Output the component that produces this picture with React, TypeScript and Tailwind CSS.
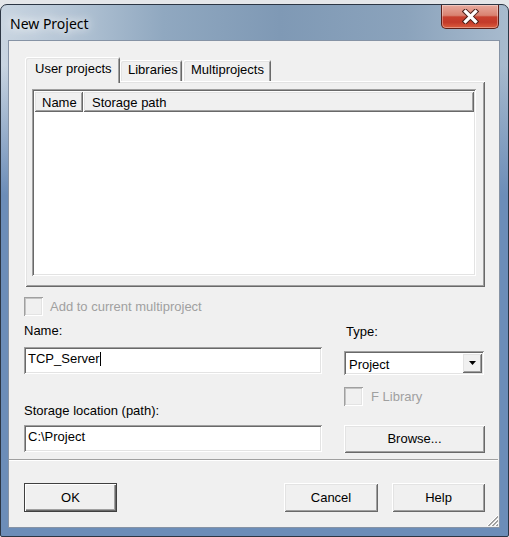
import React from "react";

const raised =
  "shadow-[inset_1px_1px_0_#ffffff,inset_-1px_-1px_0_#696969,inset_2px_2px_0_#e3e3e3,inset_-2px_-2px_0_#a0a0a0]";
const sunken =
  "shadow-[inset_1px_1px_0_#a0a0a0,inset_-1px_-1px_0_#ffffff,inset_2px_2px_0_#696969,inset_-2px_-2px_0_#e3e3e3]";
const sunkenDisabled =
  "shadow-[inset_1px_1px_0_#a0a0a0,inset_-1px_-1px_0_#ffffff,inset_2px_2px_0_#c4c4c4,inset_-2px_-2px_0_#e3e3e3]";
const tabShadow =
  "shadow-[inset_1px_1px_0_#ffffff,inset_-1px_0_0_#696969,inset_2px_2px_0_#e3e3e3,inset_-2px_0_0_#a0a0a0]";

function Grip() {
  const ks = [1, 5, 9];
  return (
    <svg width="12" height="12" viewBox="0 0 12 12">
      {ks.map((k) => (
        <g key={k}>
          <line x1={k} y1={12} x2={12} y2={k} stroke="#ffffff" strokeWidth="1" />
          <line x1={k + 1} y1={12} x2={12} y2={k + 1} stroke="#a0a0a0" strokeWidth="1" />
          <line x1={k + 2} y1={12} x2={12} y2={k + 2} stroke="#a0a0a0" strokeWidth="1" />
        </g>
      ))}
    </svg>
  );
}

function CloseX() {
  const d = "M3.5 2.5 L13.5 12.5 M13.5 2.5 L3.5 12.5";
  return (
    <svg width="17" height="15" viewBox="0 0 17 15">
      <path d={d} stroke="#4b1f19" strokeWidth="5.2" strokeLinecap="square" fill="none" />
      <path d={d} stroke="#ffffff" strokeWidth="3.2" strokeLinecap="square" fill="none" />
    </svg>
  );
}

export default function App() {
  return (
    <div className="w-[509px] h-[537px] bg-[#e4e6e9] pt-[4px] overflow-hidden font-['Liberation_Sans',Arial,sans-serif] text-[13px] leading-[16px] text-black">
      <div className="w-[509px] h-[533px] rounded-t-[7px] rounded-b-[2px] border border-[#2c3644] flex flex-col [background-image:linear-gradient(180deg,rgba(108,141,184,0)_0px,rgba(108,141,184,0)_60px,rgba(108,141,184,1)_190px),linear-gradient(90deg,#c9d5e1_0%,#b7c7d7_12%,#90a8c0_32%,#7f99b5_55%,#8ba3bc_80%,#a8bbce_100%)]">
        {/* Title bar */}
        <div className="flex h-[35px] items-start">
          <div className="pl-[9px] pt-[9px] text-[14px] leading-[20px] font-['Noto_Sans',sans-serif] text-black [text-shadow:0_0_8px_#ffffff,0_0_14px_#ffffff]">
            New Project
          </div>
          <div className="ml-auto mr-[9px] w-[58px] h-[24px] rounded-b-[5px] border border-t-0 border-[#5c2019] bg-[linear-gradient(180deg,#e8aa9e_0%,#d98271_45%,#c7402f_52%,#c33a2a_75%,#db5d3d_100%)] shadow-[inset_0_0_0_1px_rgba(255,255,255,0.35)] flex items-center justify-center">
            <CloseX />
          </div>
        </div>

        {/* Client area */}
        <div className="ml-[7px] w-[492px] h-[488px] border border-[#8693a5] bg-[#f0f0f0] relative flex flex-col pl-[15px] pr-[14px] pt-[16px]">
          {/* Tabs */}
          <div className="flex items-end h-[24px] ml-[1px] relative z-10">
            <div className={`w-[95px] h-[26px] -mb-[2px] bg-[#f0f0f0] rounded-t-[2px] pt-[4px] pl-[10px] ${tabShadow}`}>
              User projects
            </div>
            <div className={`w-[62px] h-[21px] rounded-t-[2px] pt-[2px] pl-[8px] ${tabShadow}`}>
              Libraries
            </div>
            <div className={`ml-[1px] w-[88px] h-[21px] rounded-t-[2px] pt-[2px] pl-[8px] ${tabShadow}`}>
              Multiprojects
            </div>
          </div>

          {/* Tab panel */}
          <div className={`ml-[1px] w-[460px] h-[206px] pt-[8px] pl-[7px] ${raised}`}>
            <div className={`w-[444px] h-[187px] bg-white p-[2px] flex flex-col ${sunken}`}>
              <div className="flex h-[21px]">
                <div className={`w-[49px] bg-[#f0f0f0] pl-[8px] pt-[4px] ${raised}`}>Name</div>
                <div className={`flex-1 bg-[#f0f0f0] pl-[9px] pt-[4px] ${raised}`}>Storage path</div>
              </div>
            </div>
          </div>

          {/* Add to current multiproject */}
          <div className="mt-[10px] h-[19px] flex items-center">
            <div className={`w-[19px] h-[19px] bg-[#f0f0f0] ${sunkenDisabled}`} />
            <span className="ml-[7px] text-[#a0a0a0]">Add to current multiproject</span>
          </div>

          {/* Form grid */}
          <div className="flex gap-[22px]">
            <div className="w-[298px] flex flex-col">
              <div className="mt-[7px] h-[16px]">Name:</div>
              <div className={`mt-[8px] h-[27px] bg-white pl-[4px] pt-[4px] flex items-start ${sunken}`}>
                <span>TCP_Server</span>
                <span className="mt-[1px] w-[1px] h-[14px] bg-black" />
              </div>
              <div className="mt-[29px] h-[16px]">Storage location (path):</div>
              <div className={`mt-[6px] h-[27px] bg-white pl-[4px] pt-[4px] ${sunken}`}>C:\Project</div>
            </div>
            <div className="w-[141px] flex flex-col">
              <div className="mt-[8px] h-[16px] pl-[2px]">Type:</div>
              <div className={`mt-[11px] w-[140px] h-[24px] bg-white p-[2px] flex ${sunken}`}>
                <div className="flex-1 pl-[3px] pt-[4px]">Project</div>
                <div className={`w-[20px] h-[20px] bg-[#f0f0f0] flex items-center justify-center ${raised}`}>
                  <svg width="7" height="4" viewBox="0 0 7 4">
                    <path d="M0 0 H7 L3.5 4 Z" fill="#000" />
                  </svg>
                </div>
              </div>
              <div className="mt-[12px] h-[19px] flex items-center">
                <div className={`w-[19px] h-[19px] bg-[#f0f0f0] ${sunkenDisabled}`} />
                <span className="ml-[8px] text-[#a0a0a0]">F Library</span>
              </div>
              <div className={`mt-[19px] w-[141px] h-[28px] bg-[#f0f0f0] flex items-center justify-center ${raised}`}>
                Browse...
              </div>
            </div>
          </div>

          {/* Separator */}
          <div className="mt-[6px] -ml-[15px] -mr-[13px] h-[2px] border-t border-t-[#a0a0a0] border-b border-b-white" />

          {/* Buttons */}
          <div className="mt-[22px] flex h-[29px]">
            <div className="w-[93px] h-[29px] bg-[#f0f0f0] flex items-center justify-center shadow-[inset_0_0_0_1px_#404040,inset_2px_2px_0_#ffffff,inset_-2px_-2px_0_#696969,inset_-3px_-3px_0_#a0a0a0]">
              OK
            </div>
            <div className={`ml-auto w-[94px] h-[29px] bg-[#f0f0f0] flex items-center justify-center ${raised}`}>
              Cancel
            </div>
            <div className={`ml-[14px] w-[93px] h-[29px] bg-[#f0f0f0] flex items-center justify-center ${raised}`}>
              Help
            </div>
          </div>

          <div className="absolute right-[1px] bottom-[1px] w-[12px] h-[12px]">
            <Grip />
          </div>
        </div>
      </div>
    </div>
  );
}
